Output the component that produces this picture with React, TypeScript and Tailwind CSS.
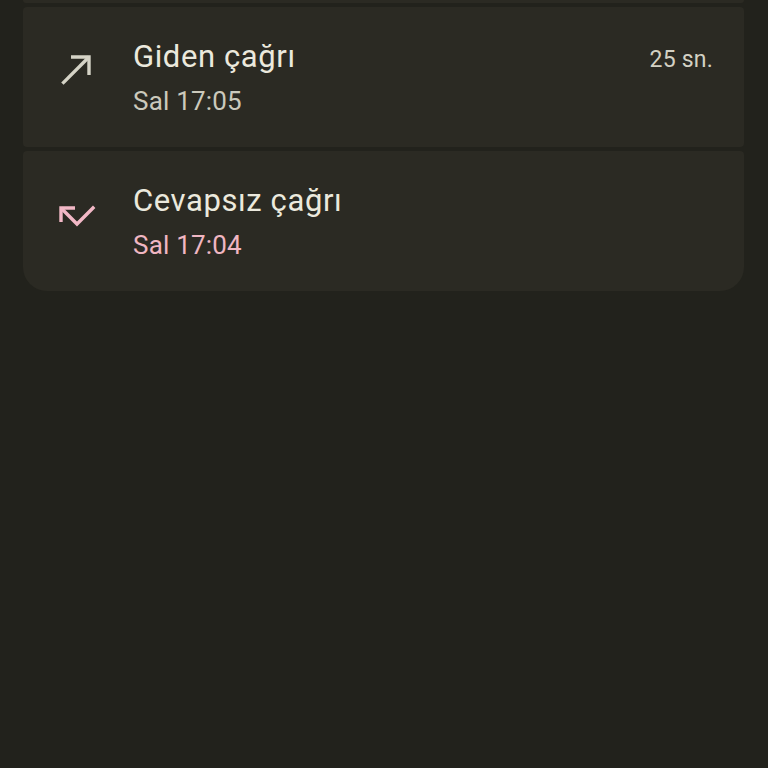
import React from "react";

const font = { fontFamily: "Roboto, 'Noto Sans', sans-serif" };

function CallMadeIcon() {
  return (
    <svg width="48" height="48" viewBox="0 0 24 24" fill="none" stroke="#d5d3c6" strokeWidth="1.7" strokeLinecap="butt" strokeLinejoin="miter">
      <path d="M9 6H18V15" />
      <path d="M18 6L4.7 19.3" />
    </svg>
  );
}

function CallMissedIcon() {
  return (
    <svg width="48" height="48" viewBox="0 0 24 24" fill="none" stroke="#f2b8c6" strokeWidth="1.7" strokeLinecap="butt" strokeLinejoin="miter">
      <path d="M11 8H4V15" />
      <path d="M4 8L12 16L20.6 7.4" />
    </svg>
  );
}

export default function App() {
  return (
    <div className="w-[768px] h-[768px] bg-[#22221c] overflow-hidden" style={font}>
      <div className="ml-[23px] mr-[24px] h-[3px] bg-[#2b2a23] rounded-b-[4px]" />
      <div className="mt-[4px] ml-[23px] mr-[24px] flex flex-col gap-[4px]">
        <div className="h-[140px] bg-[#2b2a23] rounded-[4px] flex items-start pl-[30px] pr-[31px]">
          <div className="mt-[38px] w-[48px] h-[48px] shrink-0">
            <CallMadeIcon />
          </div>
          <div className="ml-[32px] pt-[32px] flex flex-col flex-1">
            <div className="text-[31px] leading-[36px] tracking-[0.6px] text-[#ebe9dd]">Giden çağrı</div>
            <div className="mt-[10px] text-[26px] leading-[32px] tracking-[0.2px] text-[#cbc9bc]">Sal 17:05</div>
          </div>
          <div className="mt-[37px] text-[23px] leading-[32px] tracking-[0.2px] text-[#d3d1c4]">25 sn.</div>
        </div>
        <div className="h-[140px] bg-[#2b2a23] rounded-t-[4px] rounded-b-[24px] flex items-start pl-[30px] pr-[31px]">
          <div className="mt-[41px] w-[48px] h-[48px] shrink-0">
            <CallMissedIcon />
          </div>
          <div className="ml-[32px] pt-[32px] flex flex-col flex-1">
            <div className="text-[31px] leading-[36px] tracking-[0.6px] text-[#ebe9dd]">Cevapsız çağrı</div>
            <div className="mt-[10px] text-[26px] leading-[32px] tracking-[0.2px] text-[#f0b6c2]">Sal 17:04</div>
          </div>
        </div>
      </div>
    </div>
  );
}
